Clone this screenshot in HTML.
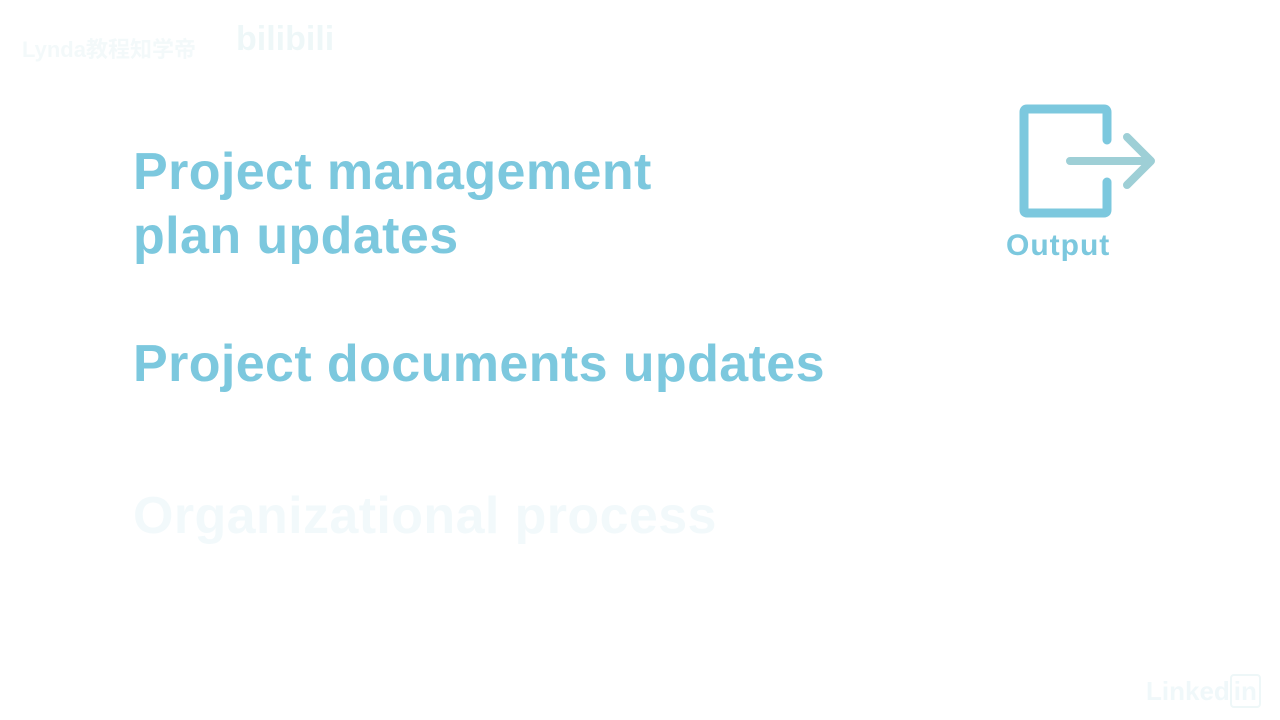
<!DOCTYPE html>
<html><head><style>
body{margin:0;width:1280px;height:720px;background:#fff;overflow:hidden;position:relative;font-family:"Liberation Sans",sans-serif}
.t{position:absolute;left:133px;font-weight:bold;font-size:52px;color:#7cc8de;white-space:nowrap;line-height:64px;letter-spacing:0.4px}
</style></head><body>
<div class="t" style="top:140px">Project management<br>plan updates</div>
<div class="t" style="top:332px">Project documents updates</div>
<div class="t" style="top:484px;color:#f2f9fb">Organizational process</div>
<div style="position:absolute;left:22px;top:32px;font-size:22px;font-weight:bold;color:#f3f9fa;font-family:'Liberation Sans','Noto Sans CJK SC',sans-serif">Lynda教程知学帝</div>
<div style="position:absolute;left:236px;top:20px;font-size:34px;font-weight:bold;color:#eef7f8">bilibili</div>
<div style="position:absolute;left:1146px;top:676px;font-size:26px;font-weight:bold;color:#f0f8fa">Linked<span style="border:2px solid #eef7f8;border-radius:4px;padding:0 2px">in</span></div>
<svg style="position:absolute;left:0;top:0" width="1280" height="720">
<path d="M1107 140 V112 Q1107 109 1104 109 H1027 Q1024 109 1024 112 V210 Q1024 213 1027 213 H1104 Q1107 213 1107 210 V182" fill="none" stroke="#7cc8de" stroke-width="9" stroke-linecap="round"/>
<path d="M1070 161 H1150 M1127 137 L1151 161 L1127 185" fill="none" stroke="#9ecfd6" stroke-width="8" stroke-linecap="round" stroke-linejoin="round"/>
</svg>
<div style="position:absolute;left:1006px;top:229px;font-size:30px;font-weight:bold;color:#7cc8de;letter-spacing:1px">Output</div>
</body></html>
